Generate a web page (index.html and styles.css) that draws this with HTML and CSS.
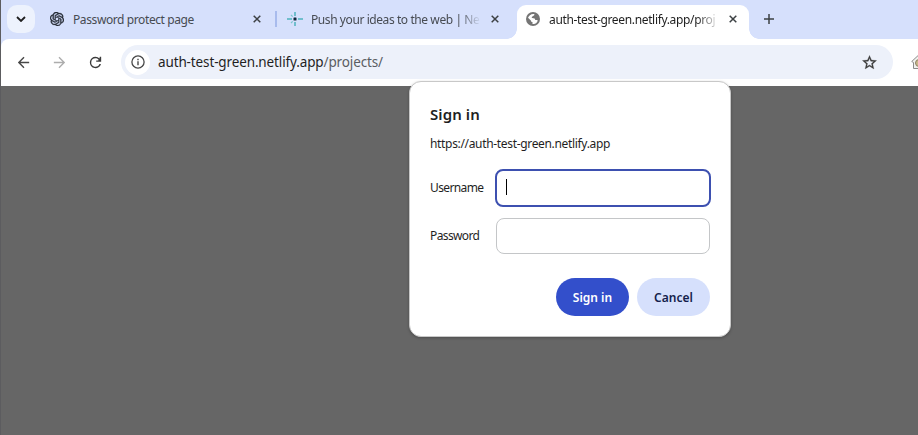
FILE: index.html
```
<!DOCTYPE html>
<html lang="en">
<head>
<meta charset="utf-8">
<title>auth-test-green.netlify.app/projects/</title>
<link rel="stylesheet" href="styles.css">
</head>
<body>
<div class="window">
  <header class="tabstrip">
    <button class="tab-search" aria-label="Search tabs"><svg width="10" height="6" viewBox="0 0 10 6"><path d="M1 1l4 4 4-4" fill="none" stroke="#1f1f1f" stroke-width="1.8"/></svg></button>
    <div class="tab tab-first">
      <svg class="favicon" viewBox="0 0 24 24"><path fill="#252b35" stroke="#252b35" stroke-width=".7" d="M22.2819 9.8211a5.9847 5.9847 0 0 0-.5157-4.9108 6.0462 6.0462 0 0 0-6.5098-2.9A6.0651 6.0651 0 0 0 4.9807 4.1818a5.9847 5.9847 0 0 0-3.9977 2.9 6.0462 6.0462 0 0 0 .7427 7.0966 5.98 5.98 0 0 0 .511 4.9107 6.051 6.051 0 0 0 6.5146 2.9001A5.9847 5.9847 0 0 0 13.2599 24a6.0557 6.0557 0 0 0 5.7718-4.2058 5.9894 5.9894 0 0 0 3.9977-2.9001 6.0557 6.0557 0 0 0-.7475-7.0729zm-9.022 12.6081a4.4755 4.4755 0 0 1-2.8764-1.0408l.1419-.0804 4.7783-2.7582a.7948.7948 0 0 0 .3927-.6813v-6.7369l2.02 1.1686a.071.071 0 0 1 .038.052v5.5826a4.504 4.504 0 0 1-4.4945 4.4944zm-9.6607-4.1254a4.4708 4.4708 0 0 1-.5346-3.0137l.142.0852 4.783 2.7582a.7712.7712 0 0 0 .7806 0l5.8428-3.3685v2.3324a.0804.0804 0 0 1-.0332.0615L9.74 19.9502a4.4992 4.4992 0 0 1-6.1408-1.6464zM2.3408 7.8956a4.485 4.485 0 0 1 2.3655-1.9728V11.6a.7664.7664 0 0 0 .3879.6765l5.8144 3.3543-2.0201 1.1685a.0757.0757 0 0 1-.071 0l-4.8303-2.7865A4.504 4.504 0 0 1 2.3408 7.872zm16.5963 3.8558L13.1038 8.364 15.1192 7.2a.0757.0757 0 0 1 .071 0l4.8303 2.7913a4.4944 4.4944 0 0 1-.6765 8.1042v-5.6772a.79.79 0 0 0-.407-.667zm2.0107-3.0231l-.142-.0852-4.7735-2.7818a.7759.7759 0 0 0-.7854 0L9.409 9.2297V6.8974a.0662.0662 0 0 1 .0284-.0615l4.8303-2.7866a4.4992 4.4992 0 0 1 6.6802 4.66zM8.3065 12.863l-2.02-1.1638a.0804.0804 0 0 1-.038-.0567V6.0742a4.4992 4.4992 0 0 1 7.3757-3.4537l-.142.0805L8.704 5.459a.7948.7948 0 0 0-.3927.6813zm1.0976-2.3654l2.602-1.4998 2.6069 1.4998v2.9994l-2.5974 1.4997-2.6067-1.4997Z"/></svg>
      <span class="tab-title">Password protect page</span>
      <svg class="close" viewBox="0 0 8 8"><path d="M.7.7l6.6 6.6M7.3.7L.7 7.3"/></svg>
    </div>
    <div class="tab tab-second">
      <svg class="favicon" viewBox="0 0 16 16"><path d="M0 8h5M11 8h5" stroke="#4fb3bd" stroke-width="1.3"/><path d="M8 1v4M8 11v4" stroke="#4fb3bd" stroke-width="1.5"/><path d="M4 4l1.700 1.700M4 12l1.700-1.700" stroke="#7cc6cd" stroke-width="1.200"/><rect x="6.500" y="6.500" width="3" height="3" rx=".5" fill="#10283c"/></svg>
      <span class="tab-title faded">Push your ideas to the web | Ne</span>
      <svg class="close" viewBox="0 0 8 8"><path d="M.7.7l6.6 6.6M7.3.7L.7 7.3"/></svg>
    </div>
    <div class="tab tab-active">
      <svg class="favicon" viewBox="0 0 16 16"><circle cx="8" cy="8" r="8" fill="#757575"/><path d="M9.500 2.300c.3 1.500-.4 2-1.800 2.200-.3 1.200-1.200 1-1.200 1.900 0 .8 1 .7 2.400.7 1.300 0 1.500.9 1.600 1.900h2.700c.4 1.800-1.200 3.600-3 4.300-1 .4-2 .5-2.800.4v-2.200c-1.200 0-1.800-.6-1.800-1.700L2.300 6.700c.9-2.400 3.500-5 7.200-4.400z" fill="#fff"/></svg>
      <span class="tab-title faded">auth-test-green.netlify.app/proj</span>
      <svg class="close" viewBox="0 0 8 8"><path d="M.7.7l6.6 6.6M7.3.7L.7 7.3"/></svg>
    </div>
    <button class="new-tab" aria-label="New tab"><svg width="10" height="10" viewBox="0 0 10 10"><path d="M5 0v10M0 5h10" stroke="#3c4043" stroke-width="1.500"/></svg></button>
  </header>
  <nav class="toolbar">
    <svg class="nav-icon" viewBox="0 0 24 24"><path fill="#474747" d="M20 11H7.830l5.590-5.590L12 4l-8 8 8 8 1.410-1.410L7.830 13H20z"/></svg>
    <svg class="nav-icon" viewBox="0 0 24 24"><path fill="#adadad" d="M4 11h12.170l-5.590-5.590L12 4l8 8-8 8-1.410-1.410L16.170 13H4z"/></svg>
    <svg class="nav-icon" viewBox="0 0 24 24"><path fill="#3c3c3c" d="M17.650 6.350A7.958 7.958 0 0 0 12 4a8 8 0 1 0 7.730 10h-2.080A6 6 0 1 1 12 6c1.660 0 3.140.69 4.220 1.780L16 9h-3v2h7V4h-2z"/></svg>
    <div class="omnibox">
      <span class="site-info"><svg width="14" height="14" viewBox="0 0 14 14"><circle cx="7" cy="7" r="6.100" fill="none" stroke="#474747" stroke-width="1.300"/><path d="M7 6.200v4M7 3.700v1.500" stroke="#474747" stroke-width="1.400"/></svg></span>
      <span class="url">auth-test-green.netlify.app<span class="path">/projects/</span></span>
      <svg class="star" viewBox="0 0 24 24"><path fill="#3c3c3c" stroke="#3c3c3c" stroke-width=".4" d="M22 9.240l-7.190-.62L12 2 9.190 8.630 2 9.240l5.460 4.730L5.820 21 12 17.270 18.180 21l-1.630-7.030zM12 15.400l-3.760 2.270 1-4.280-3.320-2.880 4.380-.38L12 6.100l1.710 4.040 4.380.38-3.320 2.880 1 4.280z"/></svg>
    </div>
    <svg class="extension" viewBox="0 0 16 16"><path d="M.7 7.500L8 .7l7.300 6.800-2 1v6H2.500v-6z" fill="#f2f2ef" stroke="#8b8b8b"/><circle cx="8" cy="9" r="3.500" fill="#c9b98c" stroke="#8d8266"/></svg>
  </nav>
  <main class="page">
    <form class="dialog">
      <h1>Sign in</h1>
      <p class="origin">https://auth-test-green.netlify.app</p>
      <div class="row"><label>Username</label><div class="field focused"><span class="caret"></span></div></div>
      <div class="row"><label>Password</label><div class="field"></div></div>
      <div class="actions"><button type="button" class="primary">Sign in</button><button type="button" class="secondary">Cancel</button></div>
    </form>
  </main>
</div>
</body>
</html>
```
FILE: styles.css
```
* { box-sizing: border-box; }
body { margin: 0; background: #666; font-family: "Noto Sans", "Open Sans", sans-serif; font-size: 12px; color: #1f1f1f; overflow: hidden; }
button { border: 0; padding: 0; font: inherit; display: flex; align-items: center; justify-content: center; }
svg { display: block; flex: none; }
.window { height: 435px; border-left: 1px solid #5c5c5f; display: flex; flex-direction: column; background: #d6e0fc; }
.tabstrip { height: 39px; flex: none; display: flex; background: #d6e0fc; }
.tab-search { width: 28px; height: 28px; margin: 5px 0 0 6px; border-radius: 10px; background: #edf2fd; }
.tab { height: 28px; margin-top: 5px; display: flex; align-items: center; white-space: nowrap; color: #474b52; }
.favicon { width: 14px; height: 14px; }
.tab-title { flex: 1; min-width: 0; margin-left: 9px; line-height: 18px; letter-spacing: -0.4px; padding-top: 1px; }
.close { width: 8px; height: 8px; fill: none; stroke: #3c4043; stroke-width: 1.5; }
.tab-first { width: 226px; padding-left: 15px; }
.tab-second { width: 238px; padding-left: 26px; position: relative; }
.tab-second .favicon { width: 16px; height: 16px; }
.tab-second .tab-title { margin-left: 8px; letter-spacing: -0.42px; }
.tab-second::before { content: ""; position: absolute; left: 14px; top: 6px; width: 2px; height: 16px; background: #a8bbed; }
.faded { margin-right: 10px; -webkit-mask-image: linear-gradient(to right, #000 calc(100% - 22px), transparent); mask-image: linear-gradient(to right, #000 calc(100% - 22px), transparent); }
.tab-active { position: relative; width: 232px; height: 34px; margin-left: 18px; padding: 0 12px 6px 9px; border-radius: 9px 9px 0 0; background: #fff; color: #1f1f1f; }
.tab-active .tab-title { margin-left: 9px; letter-spacing: -0.34px; }
.tab-active::before, .tab-active::after { content: ""; position: absolute; bottom: 0; width: 10px; height: 10px; }
.tab-active::before { right: 100%; background: radial-gradient(circle at 0 0, transparent 9.5px, #fff 10px); }
.tab-active::after { left: 100%; background: radial-gradient(circle at 100% 0, transparent 9.5px, #fff 10px); }
.new-tab { width: 28px; height: 28px; margin: 5px 0 0 6px; background: none; }
.toolbar { height: 47px; flex: none; display: flex; align-items: center; background: #fff; border-radius: 8px 0 0; padding: 0 0 1px 13.5px; overflow: hidden; }
.nav-icon { width: 17px; height: 17px; margin-right: 19px; }
.omnibox { width: 772px; height: 34px; flex: none; margin-left: -1.5px; border-radius: 17px; background: #edf1fa; display: flex; align-items: center; padding: 0 15.5px 0 4px; }
.site-info { width: 25px; height: 25px; border-radius: 50%; background: #fff; display: flex; align-items: center; justify-content: center; }
.url { flex: 1; margin-left: 8px; font-size: 13.5px; letter-spacing: -0.13px; }
.path { color: #5a5d62; }
.star { width: 17px; height: 17px; }
.extension { width: 16px; height: 16px; margin-left: 18px; }
.page { flex: 1; background: #666; }
.dialog { position: relative; top: -5px; width: 322px; height: 256px; margin-left: 408px; padding: 21px 20px 20px; border: 1px solid #c8c8c8; border-radius: 12px; background: #fff; box-shadow: 0 1px 3px rgba(0,0,0,.25); display: flex; flex-direction: column; }
h1 { margin: 0; font-size: 15px; line-height: 22px; font-weight: 600; letter-spacing: 0.1px; }
.origin { margin: 11px 0 18px; line-height: 16px; letter-spacing: -0.33px; }
.row { display: flex; align-items: center; height: 36px; margin-bottom: 12px; }
label { width: 66px; letter-spacing: -0.62px; padding-bottom: 2px; }
.field { width: 214px; height: 36px; border: 1px solid #c4c6c8; border-radius: 8px; }
.focused { border: 2px solid #3d50b0; width: 216px; height: 38px; margin: -1px; padding: 8px 9px; }
.caret { display: block; width: 1px; height: 16px; background: #000; }
.actions { display: flex; justify-content: flex-end; gap: 8px; margin-top: 12px; }
.actions button { width: 73px; height: 38px; border-radius: 19px; font-weight: 600; letter-spacing: 0; }
.primary { background: #334fcb; color: #fff; }
.secondary { background: #d6e0fc; color: #141e4c; }
```
